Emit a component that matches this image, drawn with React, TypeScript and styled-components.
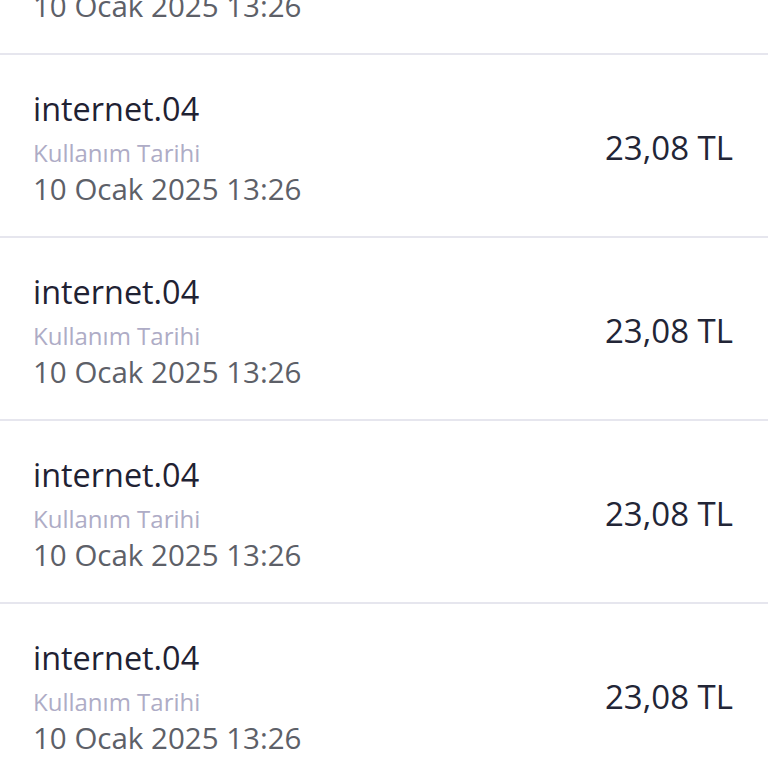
import React from "react";
import styled, { createGlobalStyle } from "styled-components";

const Global = createGlobalStyle`
  html, body { margin: 0; padding: 0; background: #ffffff; }
  body { font-family: "Open Sans", "Noto Sans", sans-serif; overflow: hidden; }
`;

const Screen = styled.div`
  width: 768px;
  height: 768px;
  overflow: hidden;
  background: #ffffff;
`;

const List = styled.ul`
  list-style: none;
  margin: -128px 0 0 0;
  padding: 0;
`;

const Row = styled.li`
  display: flex;
  align-items: center;
  justify-content: space-between;
  height: 181px;
  padding: 0 35px 0 33px;
  border-bottom: 2px solid #e6e6ee;
`;

const Info = styled.div`
  display: flex;
  flex-direction: column;
`;

const Title = styled.div`
  font-size: 32.4px;
  line-height: 44px;
  font-weight: 500;
  color: #1f2233;
  margin-bottom: 5px;
`;

const Label = styled.div`
  font-size: 24px;
  line-height: 36px;
  color: #aeacc6;
`;

const DateText = styled.div`
  font-size: 29.5px;
  line-height: 35px;
  color: #5d6068;
`;

const Amount = styled.div`
  font-size: 33px;
  line-height: 40px;
  font-weight: 500;
  color: #222536;
  margin-top: 5px;
`;

const items = Array.from({ length: 5 }, () => ({
  title: "internet.04",
  label: "Kullanım Tarihi",
  date: "10 Ocak 2025 13:26",
  amount: "23,08 TL",
}));

export default function App() {
  return (
    <>
      <Global />
      <Screen>
        <List>
          {items.map((it, i) => (
            <Row key={i}>
              <Info>
                <Title>{it.title}</Title>
                <Label>{it.label}</Label>
                <DateText>{it.date}</DateText>
              </Info>
              <Amount>{it.amount}</Amount>
            </Row>
          ))}
        </List>
      </Screen>
    </>
  );
}
